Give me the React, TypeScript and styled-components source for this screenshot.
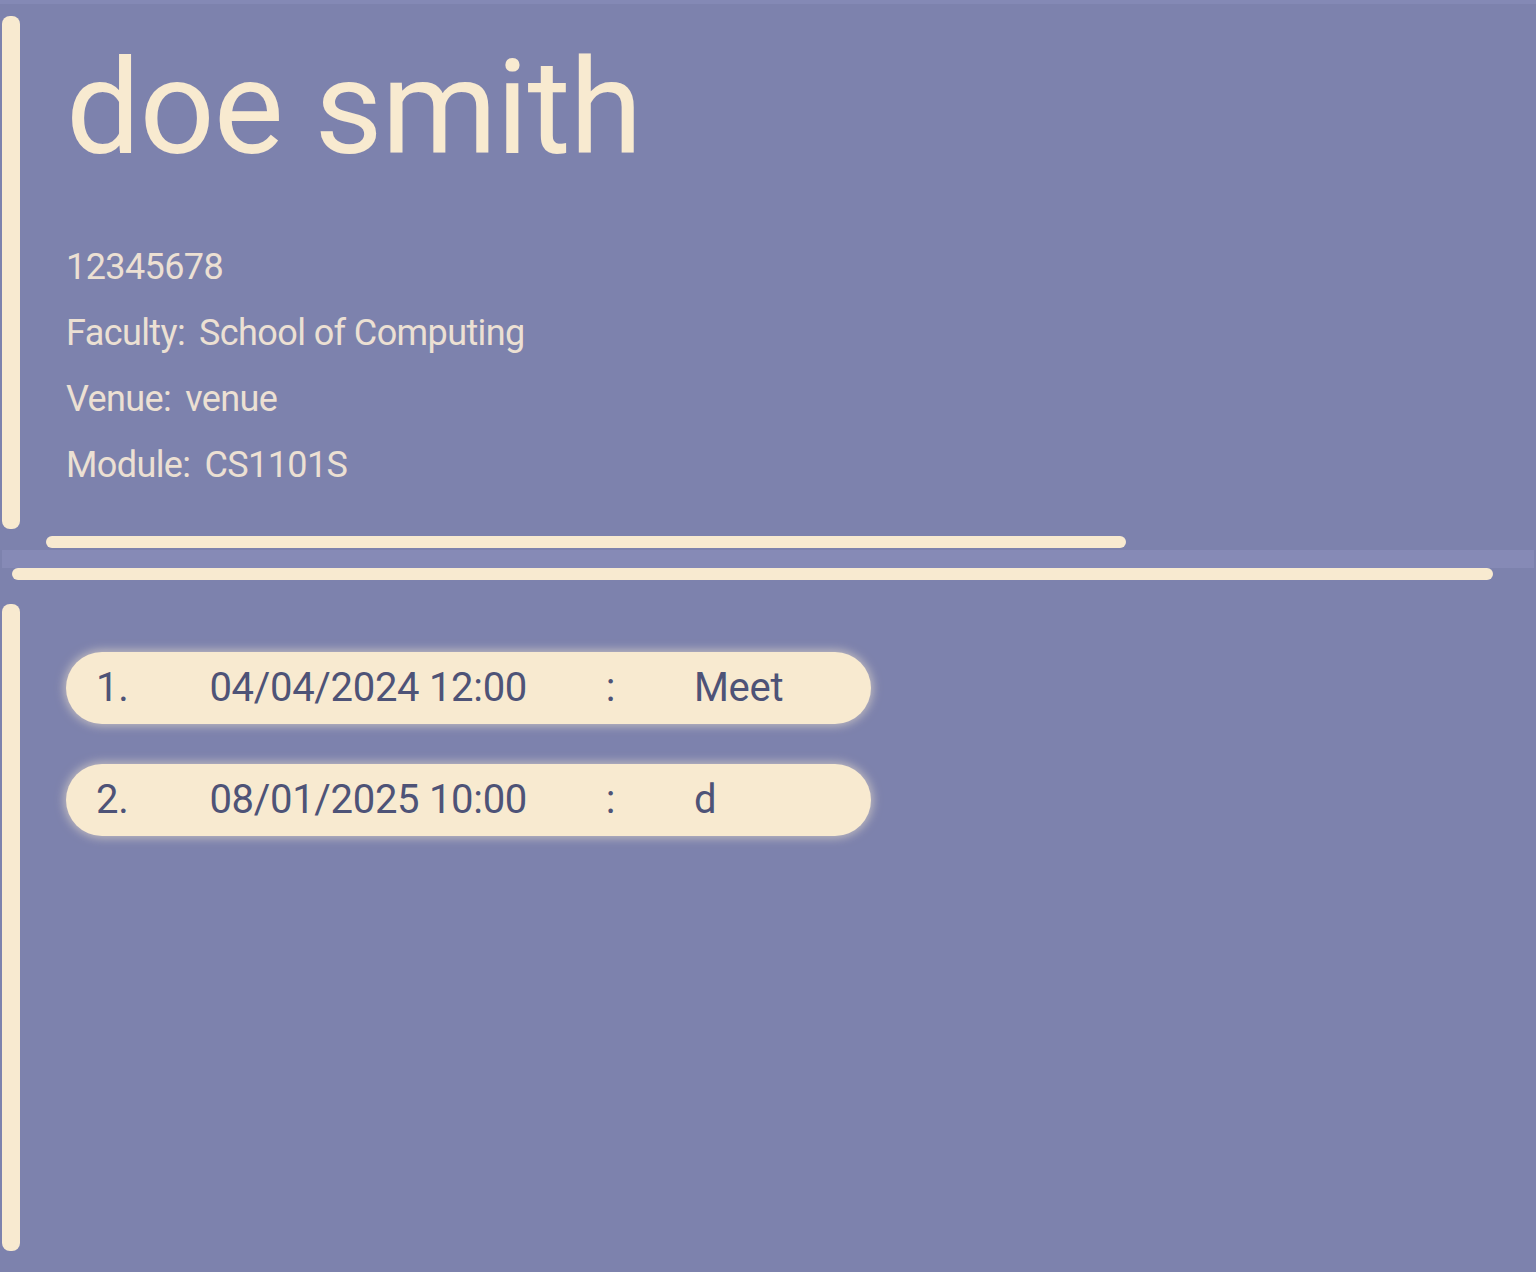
import React from "react";
import styled, { createGlobalStyle } from "styled-components";

const cream = "#f8ead0";
const bg = "#7d82ad";

const Global = createGlobalStyle`
  html, body { margin: 0; padding: 0; background: ${bg}; }
  body { font-family: Roboto, "Liberation Sans", sans-serif; }
`;

const Page = styled.div`
  width: 1536px;
  height: 1272px;
  background: ${bg};
  display: flex;
  flex-direction: column;
  overflow: hidden;
`;

const TopStrip = styled.div`
  height: 4px;
  background: #8489b5;
`;

const Panel = styled.div<{ $top: number }>`
  display: flex;
  padding: ${(p) => p.$top}px 0 0 2px;
`;

const VTrack = styled.div<{ $h: number }>`
  width: 18px;
  height: ${(p) => p.$h}px;
  border-radius: 8px;
  background: ${cream};
  flex: none;
`;

const Content = styled.div`
  margin-left: 46px;
  display: flex;
  flex-direction: column;
`;

const Name = styled.h1`
  margin: 26px 0 0;
  font-size: 132px;
  line-height: 132px;
  font-weight: 400;
  color: ${cream};
  letter-spacing: -1px;
`;

const Details = styled.div`
  margin-top: 60px;
  display: flex;
  flex-direction: column;
`;

const Line = styled.div`
  font-size: 36px;
  line-height: 66px;
  color: #ece0d3;
  letter-spacing: -0.6px;
  display: flex;
  gap: 14px;
`;

const HBar = styled.div<{ $left: number; $w: number; $mt: number }>`
  margin: ${(p) => p.$mt}px 0 0 ${(p) => p.$left}px;
  width: ${(p) => p.$w}px;
  height: 12px;
  border-radius: 6px;
  background: ${cream};
  flex: none;
`;

const Divider = styled.div`
  margin: 2px 2px 0 2px;
  height: 18px;
  background: #868ab6;
  flex: none;
`;

const List = styled.div`
  margin-left: 46px;
  padding-top: 48px;
  display: flex;
  flex-direction: column;
  gap: 40px;
`;

const Pill = styled.div`
  width: 805px;
  height: 72px;
  border-radius: 36px;
  background: ${cream};
  box-shadow: 0 0 10px 2px rgba(248, 234, 208, 0.55);
  display: grid;
  grid-template-columns: 100px 331px 167px 1fr;
  padding-left: 30px;
  box-sizing: border-box;
  font-size: 40px;
  line-height: 72px;
  letter-spacing: -0.3px;
  color: #4e5377;
`;

const Num = styled.span``;
const When = styled.span`
  text-align: right;
`;
const Colon = styled.span`
  text-align: center;
`;
const Desc = styled.span``;

const details: [string, string][] = [
  ["", "12345678"],
  ["Faculty:", "School of Computing"],
  ["Venue:", "venue"],
  ["Module:", "CS1101S"],
];

const meetings = [
  { when: "04/04/2024 12:00", what: "Meet" },
  { when: "08/01/2025 10:00", what: "d" },
];

export default function App() {
  return (
    <>
      <Global />
      <Page>
        <TopStrip />
        <Panel $top={12}>
          <VTrack $h={513} />
          <Content>
            <Name>doe smith</Name>
            <Details>
              {details.map(([label, value]) => (
                <Line key={value}>
                  {label && <span>{label}</span>}
                  <span>{value}</span>
                </Line>
              ))}
            </Details>
          </Content>
        </Panel>
        <HBar $left={46} $w={1080} $mt={7} />
        <Divider />
        <HBar $left={12} $w={1481} $mt={0} />
        <Panel $top={24}>
          <VTrack $h={647} />
          <List>
            {meetings.map((m, i) => (
              <Pill key={i}>
                <Num>{i + 1}.</Num>
                <When>{m.when}</When>
                <Colon>:</Colon>
                <Desc>{m.what}</Desc>
              </Pill>
            ))}
          </List>
        </Panel>
      </Page>
    </>
  );
}
